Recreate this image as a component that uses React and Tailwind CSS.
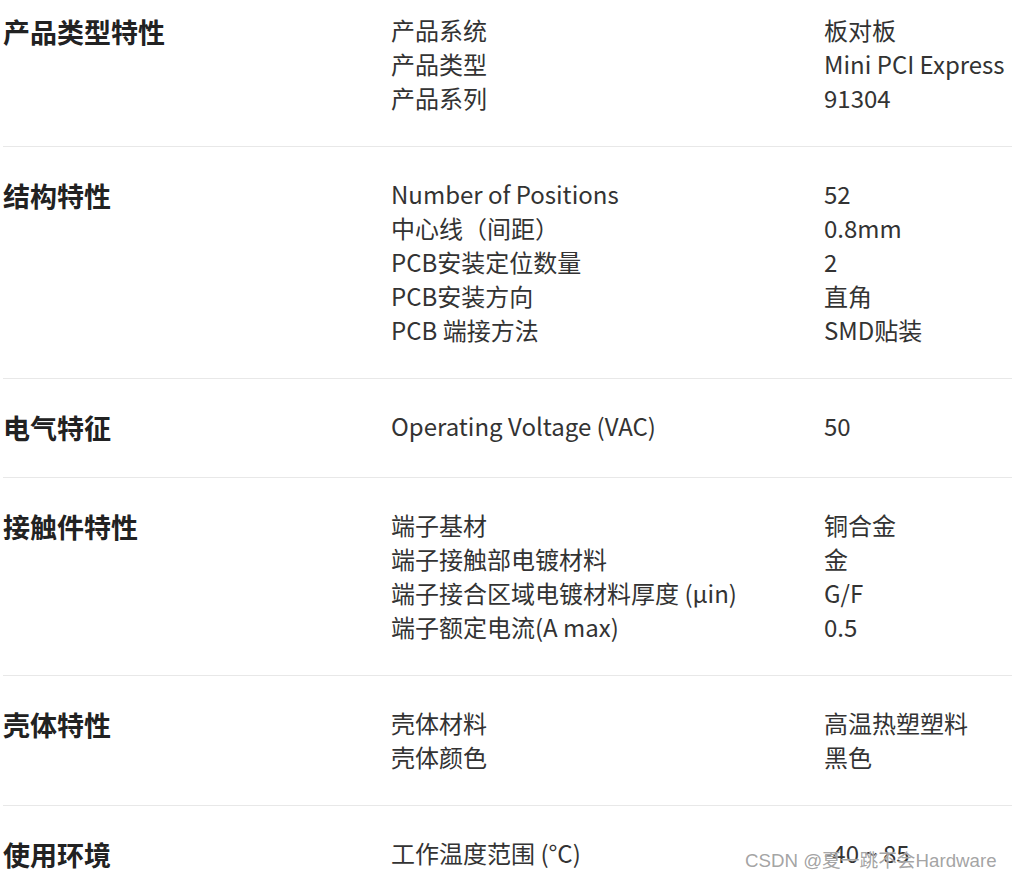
const sections = [
  {
    title: '产品类型特性',
    rows: [
      ['产品系统', '板对板'],
      ['产品类型', 'Mini PCI Express'],
      ['产品系列', '91304'],
    ],
  },
  {
    title: '结构特性',
    rows: [
      ['Number of Positions', '52'],
      ['中心线（间距）', '0.8mm'],
      ['PCB安装定位数量', '2'],
      ['PCB安装方向', '直角'],
      ['PCB 端接方法', 'SMD贴装'],
    ],
  },
  {
    title: '电气特征',
    rows: [['Operating Voltage (VAC)', '50']],
  },
  {
    title: '接触件特性',
    rows: [
      ['端子基材', '铜合金'],
      ['端子接触部电镀材料', '金'],
      ['端子接合区域电镀材料厚度 (µin)', 'G/F'],
      ['端子额定电流(A max)', '0.5'],
    ],
  },
  {
    title: '壳体特性',
    rows: [
      ['壳体材料', '高温热塑塑料'],
      ['壳体颜色', '黑色'],
    ],
  },
  {
    title: '使用环境',
    rows: [['工作温度范围 (°C)', '-40 ~ 85']],
  },
];

const App = () => {
  return (
    <div className="relative h-[881px] overflow-hidden bg-white font-['Noto_Sans_CJK_SC','Noto_Sans',sans-serif] text-[#333]">
      <div className="ml-[3px]">
        {sections.map((s, i) => (
          <div
            key={s.title}
            className={
              'grid grid-cols-[388px_433px_1fr] items-start pb-[31px] ' +
              (i === 0 ? 'pt-[13px]' : 'border-t border-[#e8e8e8] pt-[30px]')
            }
          >
            <div className="text-[27px] font-bold leading-[37px] text-[#222]">{s.title}</div>
            <div className="text-[24px] leading-[34px]">
              {s.rows.map((r) => (
                <div key={r[0]} className="whitespace-nowrap">{r[0]}</div>
              ))}
            </div>
            <div className="text-[24px] leading-[34px]">
              {s.rows.map((r) => (
                <div key={r[0]} className="whitespace-nowrap">{r[1]}</div>
              ))}
            </div>
          </div>
        ))}
      </div>
      <div className="pointer-events-none absolute left-[745px] top-[848px] whitespace-nowrap font-['Liberation_Sans','Noto_Sans_CJK_SC',sans-serif] text-[18.7px] leading-[26px] text-[#999]/90 [text-shadow:0_0_1px_#fff]">
        CSDN @夏一跳不会Hardware
      </div>
    </div>
  );
};

export default App;
